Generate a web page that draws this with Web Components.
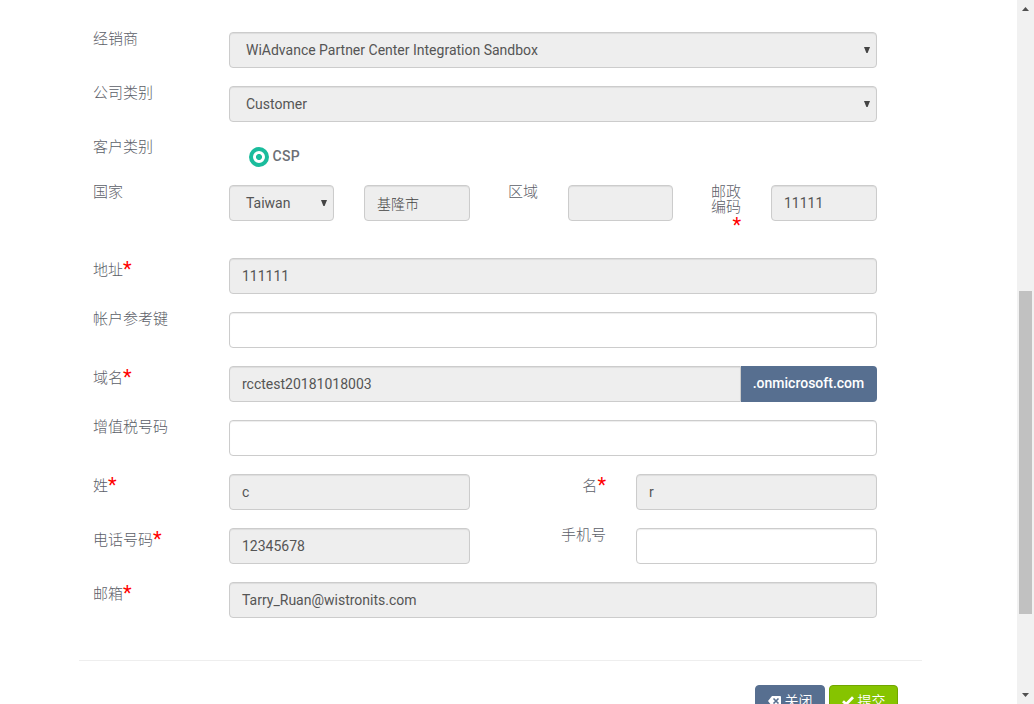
<!DOCTYPE html>
<html lang="zh-CN">
<head>
<meta charset="utf-8">
<title>客户资料</title>
<style>
html,body{margin:0;height:100%;overflow:hidden;background:#fff}
body{font-family:Roboto,"Noto Sans CJK SC",sans-serif;font-size:14px;color:#555}
</style>
</head>
<body>
<customer-page></customer-page>
<script>
const define = (name, html) => customElements.define(name, class extends HTMLElement {
  constructor() {
    super();
    this.attachShadow({ mode: 'open' }).innerHTML = html;
  }
});

define('field-label', `
<style>
:host{display:block;flex:none;box-sizing:border-box;width:136px;font-size:15px;line-height:15px;font-weight:300;color:#5c6068;padding-top:var(--label-top,0px)}
:host([right]){text-align:right}
:host([required]){--label-top:5px}
:host([tall]){--label-top:0px}
b{display:none;font-weight:400;font-size:20px;line-height:0;color:#f00;position:relative;top:1px}
:host([required]) b{display:inline}
:host([tall]) b{display:block;line-height:20px;top:0}
</style><slot></slot><b>*</b>`);

define('text-field', `
<style>
:host{display:flex;align-items:center;box-sizing:border-box;height:36px;flex:1;min-width:0;border:1px solid #ccc;border-radius:4px;padding:0 12px;background:#fff;box-shadow:inset 0 1px 1px rgba(0,0,0,.075);line-height:20px;white-space:nowrap}
:host([disabled]){background:#eee}
:host([joined]){border-radius:4px 0 0 4px}
</style><slot></slot>`);

define('select-field', `
<style>
:host{display:flex;align-items:center;justify-content:space-between;box-sizing:border-box;height:36px;flex:1;min-width:0;border:1px solid #ccc;border-radius:4px;padding:0 6px 0 16px;background:#eee;box-shadow:inset 0 1px 1px rgba(0,0,0,.075);line-height:20px;white-space:nowrap}
svg{display:block;width:6px;height:6px}
</style><slot></slot><svg viewBox="0 0 6 6"><path d="M0 0h6L3.6 6H2.4z" fill="#444"/></svg>`);

define('radio-option', `
<style>
:host{display:flex;align-items:center;gap:3.5px;font-weight:500;letter-spacing:.3px;color:#6b6f76;line-height:20px;padding:6px 0 0 20px;height:20px}
i{box-sizing:border-box;width:20px;height:20px;border:4px solid #1abc9c;border-radius:50%;background:radial-gradient(circle,#1abc9c 2.6px,#fff 3.4px);margin-top:2px}
</style><i></i><slot></slot>`);

define('domain-suffix', `
<style>
:host{display:flex;align-items:center;justify-content:center;box-sizing:border-box;width:136px;height:36px;padding:0 1px 2px 0;background:#576f90;color:#fff;font-weight:500;border-radius:0 4px 4px 0}
</style><slot></slot>`);

define('form-row', `
<style>
:host{display:flex;align-items:flex-start;height:var(--row,54px)}
</style><slot></slot>`);

define('action-button', `
<style>
:host{display:flex;box-sizing:border-box;height:36px;align-items:center;justify-content:center;gap:4px;color:#fff;font-weight:350;border:1px solid var(--edge);background:var(--fill);border-radius:4px;line-height:20px;white-space:nowrap;padding-bottom:4px}
</style><slot name="icon"></slot><slot></slot>`);

define('page-scrollbar', `
<style>
:host{display:flex;flex-direction:column;align-items:center;justify-content:space-between;box-sizing:border-box;width:17px;height:704px;background:#f1f1f1;padding:7px 0 7px}
svg{display:block;width:7px;height:4px}
i{width:13px;height:323px;background:#c1c1c1;margin-top:201px}
</style>
<svg viewBox="0 0 7 4"><path d="M0 4h7L3.5 0z" fill="#505050"/></svg>
<i></i>
<svg viewBox="0 0 7 4"><path d="M0 0h7L3.5 4z" fill="#505050"/></svg>`);

define('customer-page', `
<style>
:host{display:flex;justify-content:space-between;height:704px;overflow:hidden}
main{width:843px;margin-left:79px}
.form{padding:32px 45px 0 14px}
footer{display:flex;gap:4px;justify-content:flex-end;border-top:1px solid #eee;padding:24px 24px 0 0}
svg{display:block}
</style>
<main>
<div class="form">
<form-row><field-label>经销商</field-label><select-field>WiAdvance Partner Center Integration Sandbox</select-field></form-row>
<form-row><field-label>公司类别</field-label><select-field>Customer</select-field></form-row>
<form-row style="--row:45px"><field-label>客户类别</field-label><radio-option>CSP</radio-option></form-row>
<form-row style="--row:73px">
<field-label>国家</field-label><select-field style="flex:none;width:105px">Taiwan</select-field>
<text-field disabled style="flex:none;width:106px;margin-left:30px;padding-top:1px;font-weight:300;color:#444">基隆市</text-field>
<field-label right style="width:68px">区域</field-label>
<text-field disabled style="flex:none;width:105px;margin-left:30px"></text-field>
<field-label right required tall style="width:30px;margin-left:38px">邮政编码</field-label>
<text-field disabled style="margin-left:30px">11111</text-field>
</form-row>
<form-row><field-label required>地址</field-label><text-field disabled>111111</text-field></form-row>
<form-row><field-label>帐户参考键</field-label><text-field></text-field></form-row>
<form-row><field-label required>域名</field-label><text-field disabled joined>rcctest20181018003</text-field><domain-suffix>.onmicrosoft.com</domain-suffix></form-row>
<form-row><field-label>增值税号码</field-label><text-field></text-field></form-row>
<form-row><field-label required>姓</field-label><text-field disabled>c</text-field><field-label right required>名</field-label><text-field disabled style="margin-left:30px">r</text-field></form-row>
<form-row><field-label required>电话号码</field-label><text-field disabled>12345678</text-field><field-label right>手机号</field-label><text-field style="margin-left:30px"></text-field></form-row>
<form-row style="--row:78px"><field-label required>邮箱</field-label><text-field disabled>Tarry_Ruan@wistronits.com</text-field></form-row>
</div>
<footer>
<action-button style="width:70px;--fill:#576f90;--edge:#576f90"><svg slot="icon" width="13" height="10" viewBox="0 0 13 10"><path d="M4 0h8q1 0 1 1v8q0 1-1 1H4L0 5z" fill="#fff"/><path d="M5.5 2.5l5 5m0-5l-5 5" stroke="#576f90" stroke-width="1.6"/></svg>关闭</action-button>
<action-button style="width:69px;--fill:#86c400;--edge:#71a600"><svg slot="icon" width="12" height="10" viewBox="0 0 12 10"><path d="M1 5.2l3.2 3L11 1.2" fill="none" stroke="#fff" stroke-width="2.8"/></svg>提交</action-button>
</footer>
</main>
<page-scrollbar></page-scrollbar>`);
</script>
</body>
</html>
